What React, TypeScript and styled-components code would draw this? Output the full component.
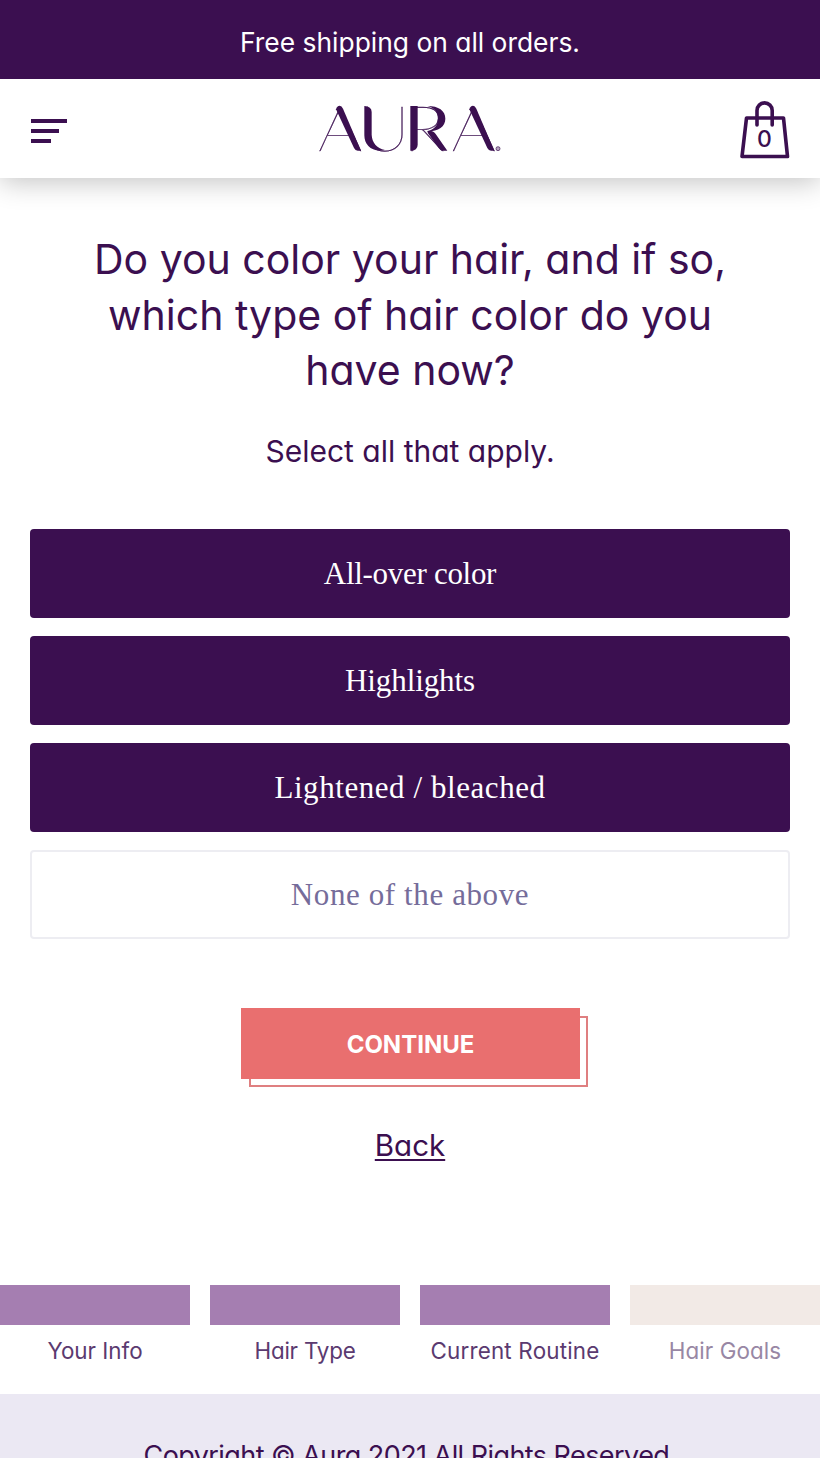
import React from 'react';
import styled, { createGlobalStyle } from 'styled-components';

const plum = '#3b0f50';
const coral = '#e96f6f';

const GlobalStyle = createGlobalStyle`
  *, *::before, *::after { box-sizing: border-box; }
  body {
    margin: 0;
    background: #fff;
    color: ${plum};
    font-family: Inter, 'Liberation Sans', sans-serif;
    font-feature-settings: 'cv11';
  }
  button { font: inherit; font-feature-settings: inherit; color: inherit; padding: 0; border: 0; background: none; cursor: pointer; }
`;

const Page = styled.div`
  height: 1458px;
  display: flex;
  flex-direction: column;
  overflow: hidden;
`;

const Banner = styled.div`
  position: relative;
  z-index: 1;
  flex: none;
  height: 79px;
  padding-top: 5px;
  display: flex;
  align-items: center;
  justify-content: center;
  background: ${plum};
  color: #fff;
  font-size: 26.4px;
`;

const Header = styled.header`
  flex: none;
  height: 99px;
  display: grid;
  grid-template-columns: 1fr 220px 1fr;
  align-items: center;
  padding: 0 30px;
  background: #fff;
  box-shadow: 0 4px 26px rgba(0, 0, 0, 0.24);
`;

const MenuButton = styled.button`
  && {
    width: 38px;
    display: flex;
    flex-direction: column;
    gap: 6px;
    padding: 4px 0 0 1px;
  }
`;

const MenuBar = styled.span<{ $width: number }>`
  width: ${(p) => p.$width}px;
  height: 4px;
  background: ${plum};
`;

const LogoMark = styled.svg`
  display: block;
  width: 220px;
  height: 80px;
  margin-top: 3px;
  text {
    font-family: Lato, sans-serif;
    font-weight: 100;
    font-size: 186px;
    fill: ${plum};
  }
`;

const BagButton = styled.button`
  justify-self: end;
  width: 50px;
  height: 60px;
  margin-top: 2px;
  svg { display: block; }
  text { font-size: 23px; font-weight: 500; fill: ${plum}; }
`;

const Main = styled.main`
  flex: none;
  height: 1107px;
  padding: 54px 30px 0;
  display: flex;
  flex-direction: column;
  align-items: center;
`;

const Question = styled.h1`
  margin: 0;
  width: 660px;
  text-align: center;
  font-size: 41px;
  font-weight: 400;
  line-height: 55.5px;
`;

const Hint = styled.p`
  margin: 34.5px 0 0;
  font-size: 30px;
  line-height: 36px;
`;

const Options = styled.div`
  width: 100%;
  margin-top: 60px;
  display: flex;
  flex-direction: column;
  gap: 18px;
`;

const Option = styled.button<{ $selected: boolean; $tracking: number }>`
  && {
    height: 89px;
    border: ${(p) => (p.$selected ? '0' : '2px solid #ededf2')};
    border-radius: 4px;
    background: ${(p) => (p.$selected ? plum : '#fff')};
    color: ${(p) => (p.$selected ? '#fff' : '#756c9a')};
    font-family: 'Liberation Serif', serif;
    font-size: 31px;
    letter-spacing: ${(p) => p.$tracking}px;
  }
`;

const ContinueButton = styled.button`
  && {
    position: relative;
    width: 339px;
    height: 71px;
    margin: 69px 0 0 1px;
    padding-top: 2px;
    background: ${coral};
    color: #fff;
    font-size: 24px;
    font-weight: 700;
  }
  &::after {
    content: '';
    position: absolute;
    z-index: -1;
    inset: 8px -8px -8px 8px;
    border: 2px solid #df7f80;
  }
`;

const BackLink = styled.button`
  && {
    margin-top: 48px;
    font-size: 29.5px;
    line-height: 36px;
    text-decoration: underline;
    text-decoration-thickness: 2px;
    text-underline-offset: 3px;
  }
`;

const Steps = styled.nav`
  flex: none;
  height: 109px;
  display: grid;
  grid-template-columns: repeat(4, 190px);
  column-gap: 20px;
`;

const Step = styled.div<{ $done: boolean; $tracking: number }>`
  display: flex;
  flex-direction: column;
  align-items: center;
  gap: 12px;
  font-size: 22.4px;
  line-height: 27px;
  letter-spacing: ${(p) => p.$tracking}px;
  color: ${(p) => (p.$done ? '#5b3a70' : '#9887a4')};
  &::before {
    content: '';
    width: 100%;
    height: 39.5px;
    background: ${(p) => (p.$done ? '#a57eb1' : '#f2eae6')};
  }
`;

const Footer = styled.footer`
  flex: none;
  height: 110px;
  padding-top: 45px;
  background: #ebe8f3;
  text-align: center;
  font-size: 27px;
  line-height: 34px;
  letter-spacing: -0.56px;
`;

const Logo = () => (
  <LogoMark viewBox="0 0 660 240" aria-label="Aura">
    <g transform="scale(1.13 1)">
      <text y="182" x="48 158 275 402" stroke={plum} strokeWidth="0.8">AURA</text>
    </g>
    <g fill={plum}>
      <path d="M108 58Q111 47 119 47Q125 47 129 56L183 182H173Q166 182 162 174Z" />
      <path d="M508 58Q511 47 519 47Q525 47 529 56L583 182H573Q566 182 562 174Z" />
      <path d="M193 48Q215 50 215 66V134C216 158 230 174 255 180C216 188 193 166 193 136Z" />
      <path d="M331 48H353V164Q353 182 331 182Z" />
      <path d="M382 48C416 48 436 62 436 86C436 110 416 124 382 124C403 118 414 106 414 86C414 65 403 53 382 48Z" />
      <path d="M382 123Q398 120 407 132L442 182H428Q421 182 416 174L384 130Z" />
    </g>
    <circle cx="594" cy="176" r="6" fill="#b7a5c0" stroke={plum} strokeWidth="2" />
  </LogoMark>
);

const Bag = () => (
  <svg width="50" height="60" viewBox="0 0 50 60" fill="none" stroke={plum} strokeWidth="3.6" strokeLinejoin="round" strokeLinecap="round">
    <path d="M6.5 18H43.5L47.5 56.5H2Z" />
    <path d="M17 25V10.5A7.6 7.6 0 0 1 32.2 10.5V25" />
    <text x="24.5" y="47" textAnchor="middle" stroke="none">0</text>
  </svg>
);

const options = [
  { label: 'All-over color', selected: true, tracking: -0.3 },
  { label: 'Highlights', selected: true, tracking: -0.1 },
  { label: 'Lightened / bleached', selected: true, tracking: 0.56 },
  { label: 'None of the above', selected: false, tracking: 0.6 },
];

const steps = [
  { label: 'Your Info', done: true, tracking: 0 },
  { label: 'Hair Type', done: true, tracking: -0.2 },
  { label: 'Current Routine', done: true, tracking: 0.2 },
  { label: 'Hair Goals', done: false, tracking: 0.1 },
];

export default function App() {
  return (
    <Page>
      <GlobalStyle />
      <Banner>Free shipping on all orders.</Banner>
      <Header>
        <MenuButton aria-label="Menu">
          <MenuBar $width={36} />
          <MenuBar $width={28} />
          <MenuBar $width={20} />
        </MenuButton>
        <Logo />
        <BagButton aria-label="Bag">
          <Bag />
        </BagButton>
      </Header>
      <Main>
        <Question>Do you color your hair, and if so, which type of hair color do you have now?</Question>
        <Hint>Select all that apply.</Hint>
        <Options>
          {options.map((o) => (
            <Option key={o.label} $selected={o.selected} $tracking={o.tracking}>
              {o.label}
            </Option>
          ))}
        </Options>
        <ContinueButton>CONTINUE</ContinueButton>
        <BackLink>Back</BackLink>
      </Main>
      <Steps>
        {steps.map((s) => (
          <Step key={s.label} $done={s.done} $tracking={s.tracking}>
            {s.label}
          </Step>
        ))}
      </Steps>
      <Footer>Copyright © Aura 2021 All Rights Reserved.</Footer>
    </Page>
  );
}
